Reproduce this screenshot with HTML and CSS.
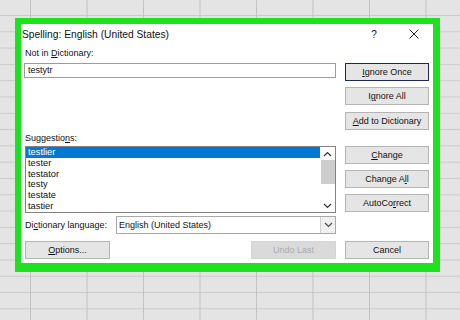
FILE: index.html
```html
<!DOCTYPE html>
<html>
<head>
<meta charset="utf-8">
<link rel="stylesheet" href="styles.css">
</head>
<body>
<div class="dialog">
  <div class="titlebar">
    <span class="title">Spelling: English (United States)</span>
    <span class="help">?</span>
    <span class="close"><svg width="10" height="10" viewBox="0 0 10 10"><path d="M0.5 0.5 L9.5 9.5 M9.5 0.5 L0.5 9.5" stroke="#222" stroke-width="1" fill="none"/></svg></span>
  </div>
  <div class="body">
    <div class="left">
      <div class="label top">Not in <u>D</u>ictionary:</div>
      <div class="input">testytr</div>
      <div class="label sugg">Suggestio<u>n</u>s:</div>
      <div class="list">
        <div class="items">
          <div class="item sel">testlier</div>
          <div class="item">tester</div>
          <div class="item">testator</div>
          <div class="item">testy</div>
          <div class="item">testate</div>
          <div class="item">tastier</div>
        </div>
        <div class="scroll">
          <div class="sarrow"><svg width="9" height="6" viewBox="0 0 9 6"><polyline points="1,5 4.5,1.5 8,5" stroke="#333" stroke-width="1.2" fill="none"/></svg></div>
          <div class="thumb"></div>
          <div class="sarrow down"><svg width="9" height="6" viewBox="0 0 9 6"><polyline points="1,1 4.5,4.5 8,1" stroke="#333" stroke-width="1.2" fill="none"/></svg></div>
        </div>
      </div>
      <div class="langrow">
        <span class="langlabel">Di<u>c</u>tionary language:</span>
        <div class="select">
          <span class="seltext">English (United States)</span>
          <span class="selarrow"><svg width="9" height="6" viewBox="0 0 9 6"><polyline points="1,1 4.5,4.5 8,1" stroke="#444" stroke-width="1.1" fill="none"/></svg></span>
        </div>
      </div>
      <div class="bottom">
        <button class="btn"><u>O</u>ptions...</button>
        <button class="btn disabled">Undo Last</button>
      </div>
    </div>
    <div class="right">
      <button class="btn default"><u>I</u>gnore Once</button>
      <button class="btn b-all">I<u>g</u>nore All</button>
      <button class="btn b-add"><u>A</u>dd to Dictionary</button>
      <button class="btn b-change"><u>C</u>hange</button>
      <button class="btn b-call">Change A<u>l</u>l</button>
      <button class="btn b-auto">AutoCo<u>r</u>rect</button>
      <button class="btn b-cancel">Cancel</button>
    </div>
  </div>
</div>
</body>
</html>
```

FILE: styles.css
```css
* { box-sizing: border-box; }

html, body { margin: 0; }

body {
  width: 460px;
  height: 320px;
  overflow: hidden;
  padding: 18px 0 0 15px;
  background-color: #e4e4e4;
  background-image:
    linear-gradient(to right, #c2c2c2 1px, transparent 1px),
    linear-gradient(to bottom, #cacaca 1px, transparent 1px);
  background-size: 56.5px 100%, 100% 16.3px;
  background-position: 30px 0, 0 15px;
  font-family: "Liberation Sans", Arial, sans-serif;
  font-size: 9px;
  color: #111;
}

.dialog {
  width: 425px;
  height: 254px;
  border: solid #1fe21f;
  border-width: 6px 7px 9px 6px;
  background: #fff;
}

.titlebar {
  height: 20px;
  display: flex;
  align-items: center;
}

.title {
  flex: 1;
  font-size: 10.25px;
  padding-left: 1px;
  color: #111;
}

.help {
  width: 20px;
  text-align: center;
  font-size: 10px;
  margin-right: 20px;
}

.close {
  width: 20px;
  display: flex;
  justify-content: center;
  margin-right: 9px;
}

.body {
  display: grid;
  grid-template-columns: 312px 84px;
  column-gap: 9px;
  padding-left: 3px;
}

.left {
  display: flex;
  flex-direction: column;
}

.label {
  padding-left: 1px;
}

.label.top {
  height: 19px;
  line-height: 19px;
}

.input {
  height: 15px;
  border: 1px solid #9c9c9c;
  padding-left: 3px;
  line-height: 13px;
}

.label.sugg {
  margin-top: 52px;
  height: 16px;
  line-height: 16px;
}

.list {
  height: 67px;
  margin-left: 1px;
  border: 1px solid #828282;
  display: flex;
}

.items {
  flex: 1;
}

.item {
  height: 10.8px;
  line-height: 10.8px;
  padding-left: 2px;
  font-size: 9.3px;
}

.item.sel {
  background: #0078d7;
  color: #fff;
}

.scroll {
  width: 15px;
  display: flex;
  flex-direction: column;
  align-items: center;
}

.sarrow {
  height: 13px;
  display: flex;
  align-items: center;
  justify-content: center;
}

.sarrow.down {
  margin-top: auto;
}

.thumb {
  width: 14px;
  height: 24px;
  background: #cdcdcd;
}

.langrow {
  margin-top: 3px;
  height: 18px;
  display: flex;
  align-items: center;
}

.langlabel {
  width: 92px;
  padding-left: 1px;
}

.select {
  width: 220px;
  height: 18px;
  border: 1px solid #a8a8a8;
  display: flex;
  align-items: stretch;
}

.seltext {
  flex: 1;
  padding-left: 2px;
  line-height: 16px;
}

.selarrow {
  width: 15px;
  border-left: 1px solid #cfcfcf;
  background: #f0f0f0;
  display: flex;
  align-items: center;
  justify-content: center;
}

.bottom {
  margin-top: 7px;
  padding-left: 1px;
  display: flex;
  justify-content: space-between;
}

.btn {
  height: 18px;
  border: 1px solid #b4b4b4;
  background: #e5e5e5;
  font: inherit;
  color: #111;
  padding: 0;
  margin: 0;
  display: flex;
  align-items: center;
  justify-content: center;
}

.bottom .btn {
  width: 85px;
}

.btn.disabled {
  background: #dadada;
  border-color: #d4d4d4;
  color: #ababab;
}

.btn.default {
  border-color: #1b2a5a;
}

.right {
  display: flex;
  flex-direction: column;
  padding-top: 19px;
}

.right .btn { width: 84px; }

.b-all { margin-top: 6px; }
.b-add { margin-top: 7px; }
.b-change { margin-top: 16px; }
.b-call { margin-top: 6px; }
.b-auto { margin-top: 6px; }
.b-cancel { margin-top: 29px; }
```
